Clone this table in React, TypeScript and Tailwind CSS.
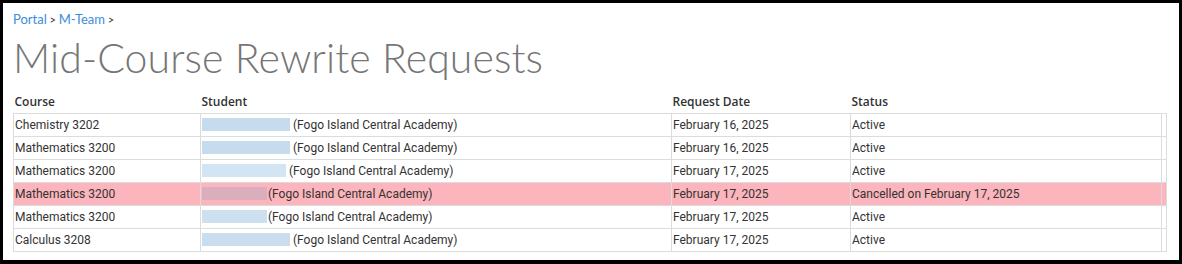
import React from 'react'

type Row = {
  course: string
  bar: number
  gap: number
  barColor: string
  date: string
  status: string
  cancelled?: boolean
}

const rows: Row[] = [
  { course: 'Chemistry 3202', bar: 88, gap: 3, barColor: 'bg-[#c6dbee]', date: 'February 16, 2025', status: 'Active' },
  { course: 'Mathematics 3200', bar: 88, gap: 3, barColor: 'bg-[#c6dbee]', date: 'February 16, 2025', status: 'Active' },
  { course: 'Mathematics 3200', bar: 84, gap: 3, barColor: 'bg-[#d3e4f2]', date: 'February 17, 2025', status: 'Active' },
  {
    course: 'Mathematics 3200',
    bar: 65,
    gap: 1,
    barColor: 'bg-[#dbaebd]',
    date: 'February 17, 2025',
    status: 'Cancelled on February 17, 2025',
    cancelled: true,
  },
  { course: 'Mathematics 3200', bar: 65, gap: 1, barColor: 'bg-[#cde0f0]', date: 'February 17, 2025', status: 'Active' },
  { course: 'Calculus 3208', bar: 88, gap: 3, barColor: 'bg-[#c9ddef]', date: 'February 17, 2025', status: 'Active' },
]

const raleway = { fontFamily: 'Lato, "Open Sans", sans-serif' }
const thead = { fontFamily: '"Open Sans", Lato, sans-serif' }

export default function App() {
  return (
    <div className="box-border h-[264px] w-[1182px] overflow-hidden border-x-[3px] border-t-[3px] border-b-4 border-black bg-white px-[10px]">
      <div className="pt-[7px] text-[13px] leading-[18px] text-[#333]" style={raleway}>
        <a href="#" className="text-[#3b8dd6]">Portal</a>
        <span className="text-[11px]"> &gt; </span>
        <a href="#" className="text-[#3b8dd6]">M-Team</a>
        <span className="text-[11px]"> &gt;</span>
      </div>

      <h1 className="mt-[5px] text-[41px] leading-[48px] font-light tracking-[0.1px] text-[#767676]" style={raleway}>
        Mid-Course Rewrite Requests
      </h1>

      <table
        className="mt-[10px] w-[1153px] table-fixed border-collapse text-[12px] text-[#333]"
        style={{ fontFamily: 'Roboto, "Liberation Sans", sans-serif' }}
      >
        <colgroup>
          <col className="w-[187px]" />
          <col className="w-[471px]" />
          <col className="w-[179px]" />
          <col className="w-[311px]" />
          <col className="w-[5px]" />
        </colgroup>
        <thead>
          <tr className="h-[21px] text-left" style={thead}>
            <th className="px-[1px] align-middle font-semibold">Course</th>
            <th className="px-[1px] align-middle font-semibold">Student</th>
            <th className="px-[1px] align-middle font-semibold">Request Date</th>
            <th className="px-[1px] align-middle font-semibold">Status</th>
            <th />
          </tr>
        </thead>
        <tbody>
          {rows.map((r, i) => (
            <tr key={i} className={r.cancelled ? 'h-[23px] bg-[#fcb5bc]' : 'h-[23px]'}>
              <td className="border border-[#dcdcdc] px-[1px]">{r.course}</td>
              <td className="border border-[#dcdcdc] px-[1px]">
                <div className="flex items-center">
                  <span className={'inline-block h-[13px] ' + r.barColor} style={{ width: r.bar }} />
                  <span style={{ marginLeft: r.gap }}>(Fogo Island Central Academy)</span>
                </div>
              </td>
              <td className="border border-[#dcdcdc] px-[1px]">{r.date}</td>
              <td className="border border-[#dcdcdc] px-[1px]">{r.status}</td>
              <td className="border border-[#dcdcdc]" />
            </tr>
          ))}
        </tbody>
      </table>
    </div>
  )
}
